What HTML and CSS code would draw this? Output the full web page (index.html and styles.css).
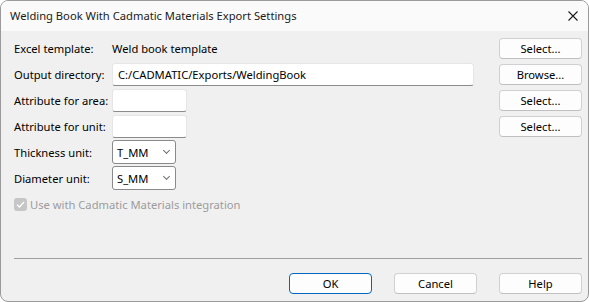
FILE: index.html
```html
<!DOCTYPE html>
<html lang="en">
<head>
    <meta charset="UTF-8">
    <title>Welding Book With Cadmatic Materials Export Settings</title>
    <link rel="stylesheet" href="styles.css">
</head>
<body>
    <div class="window">
        <div class="titlebar">
            <span class="title">Welding Book With Cadmatic Materials Export Settings</span>
            <button class="close" aria-label="Close">
                <svg width="10" height="10" viewBox="0 0 10 10">
                    <path d="M0.5 0.5 L9.5 9.5 M9.5 0.5 L0.5 9.5" stroke="#1a1a1a" stroke-width="1.1" fill="none"/>
                </svg>
            </button>
        </div>
        <div class="content">
            <div class="form">
                <span class="label">Excel template:</span>
                <span class="value">Weld book template</span>
                <button class="btn">Select...</button>

                <span class="label">Output directory:</span>
                <input class="field field-wide" type="text" value="C:/CADMATIC/Exports/WeldingBook">
                <button class="btn">Browse...</button>

                <span class="label">Attribute for area:</span>
                <input class="field field-short" type="text">
                <button class="btn">Select...</button>

                <span class="label">Attribute for unit:</span>
                <input class="field field-short" type="text">
                <button class="btn">Select...</button>

                <span class="label">Thickness unit:</span>
                <div class="combo"><span>T_MM</span><i class="chevron"></i></div>
                <span></span>

                <span class="label">Diameter unit:</span>
                <div class="combo"><span>S_MM</span><i class="chevron"></i></div>
                <span></span>

                <label class="check">
                    <span class="box">
                        <svg width="9" height="7" viewBox="0 0 9 7">
                            <path d="M1 3.6 L3.4 6 L8 1" stroke="#fff" stroke-width="1.3" fill="none"/>
                        </svg>
                    </span>
                    Use with Cadmatic Materials integration
                </label>
            </div>
            <div class="separator"></div>
            <div class="footer">
                <button class="btn btn-default">OK</button>
                <button class="btn">Cancel</button>
                <button class="btn">Help</button>
            </div>
        </div>
    </div>
</body>
</html>
```

FILE: styles.css
```css
html, body {
    margin: 0;
    padding: 0;
    background: #fff;
}
body {
    width: 589px;
    height: 302px;
    font-family: 'Noto Sans', 'Open Sans', sans-serif;
    font-size: 11.2px;
    color: #000;
}
.window {
    box-sizing: border-box;
    width: 589px;
    height: 302px;
    border: 1px solid #9a9a9a;
    border-radius: 8px;
    overflow: hidden;
    background: #f0f0f0;
    display: flex;
    flex-direction: column;
}
.titlebar {
    height: 30px;
    background: #fafafa;
    display: flex;
    align-items: center;
    justify-content: space-between;
    padding: 0 10px 0 9px;
}
.title {
    color: #1a1a1a;
    margin-top: -1px;
}
.close {
    border: none;
    background: none;
    padding: 0;
    width: 10px;
    height: 10px;
    display: flex;
}
.content {
    flex: 1;
    display: flex;
    flex-direction: column;
    padding: 4px 6px 7px 13px;
}
.form {
    display: grid;
    grid-template-columns: 98px 1fr 83px;
    grid-auto-rows: 26px;
    align-items: center;
}
.label, .value {
    white-space: nowrap;
}
.field {
    box-sizing: border-box;
    height: 23px;
    border: 1px solid #e6e6e6;
    border-bottom-color: #8b8b8b;
    border-radius: 3px;
    background: #fff;
    font: inherit;
    padding: 0 5px;
    outline: none;
}
.field-wide {
    width: 362px;
}
.field-short {
    width: 75px;
}
.combo {
    box-sizing: border-box;
    width: 64px;
    height: 24px;
    border: 1px solid #8a8a8a;
    border-radius: 3px;
    background: #fff;
    display: flex;
    align-items: center;
    justify-content: space-between;
    padding: 0 6px 0 4px;
}
.chevron {
    width: 4px;
    height: 4px;
    border-right: 1px solid #707070;
    border-bottom: 1px solid #707070;
    transform: rotate(45deg);
    margin-top: -3px;
}
.btn {
    box-sizing: border-box;
    width: 83px;
    height: 21px;
    border: 1px solid #d0d0d0;
    border-bottom-color: #c0c0c0;
    border-radius: 4px;
    background: #fdfdfd;
    font: inherit;
    color: #000;
    padding: 0;
}
.btn-default {
    border: 1px solid #0067c0;
}
.check {
    grid-column: 1 / 4;
    display: flex;
    align-items: center;
    gap: 3px;
    color: #9c9c9c;
}
.box {
    width: 13px;
    height: 13px;
    border-radius: 3px;
    background: #c6c6c6;
    display: flex;
    align-items: center;
    justify-content: center;
}
.separator {
    margin-top: auto;
    height: 1px;
    background: #a0a0a0;
}
.footer {
    display: flex;
    justify-content: flex-end;
    gap: 22px;
    margin-top: 14px;
}
```
